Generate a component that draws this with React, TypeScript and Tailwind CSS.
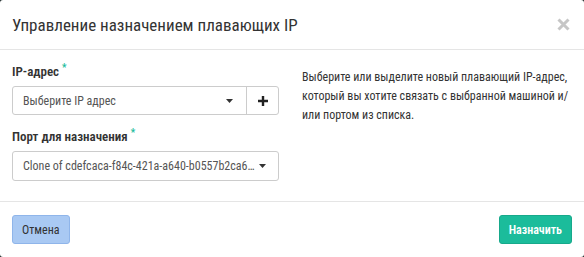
import React from "react";

const font = { fontFamily: "Roboto, 'Liberation Sans', sans-serif" };

function Caret() {
  return (
    <svg width="7" height="4" viewBox="0 0 7 4" className="shrink-0">
      <path d="M0 0 L7 0 L3.5 4 Z" fill="#333" />
    </svg>
  );
}

export default function App() {
  return (
    <div className="w-[584px] h-[257px] bg-[#1e2b2a]" style={font}>
      <div className="w-[584px] h-[257px] bg-white rounded-[3px] flex flex-col font-stretch-condensed">
        <div className="h-[50px] border-b border-[#e5e5e5] flex items-center justify-between pl-3 pr-[14px] shrink-0">
          <div className="text-[17px] text-[#333] pt-[2px]">Управление назначением плавающих IP</div>
          <svg width="13" height="13" viewBox="0 0 13 13" className="mb-[1px]">
            <path d="M1.5 1.5 L11.5 11.5 M11.5 1.5 L1.5 11.5" stroke="#c6c6c6" strokeWidth="3" />
          </svg>
        </div>
        <div className="flex h-[152px] border-b border-[#e5e5e5] shrink-0">
          <div className="w-[267px] ml-3 pt-[13px] flex flex-col">
            <div className="text-[13px] font-semibold text-[#333] leading-[18px] flex">
              IP-адрес<span className="text-[#1abc9c] text-[10px] ml-[3px] leading-[10px]">*</span>
            </div>
            <div className="mt-[5px] h-[29px] border border-[#ccc] rounded-[3px] flex">
              <div className="flex-1 flex items-center justify-between pl-[10px] pr-[13px] text-[12px] text-[#555]">
                <span>Выберите IP адрес</span>
                <Caret />
              </div>
              <div className="w-[32px] border-l border-[#ccc] flex items-center justify-center">
                <svg width="10" height="10" viewBox="0 0 10 10">
                  <path d="M5 0 V10 M0 5 H10" stroke="#222" strokeWidth="2.4" />
                </svg>
              </div>
            </div>
            <div className="mt-[13px] text-[13px] font-semibold text-[#333] leading-[18px] flex">
              Порт для назначения<span className="text-[#1abc9c] text-[10px] ml-[3px] leading-[10px]">*</span>
            </div>
            <div className="mt-[5px] h-[30px] border border-[#ccc] rounded-[3px] flex items-center justify-between pl-[10px] pr-[12px] text-[12px] text-[#555]">
              <span>Clone of cdefcaca-f84c-421a-a640-b0557b2ca6…</span>
              <Caret />
            </div>
          </div>
          <div className="ml-[23px] w-[275px] pt-[18px] text-[12px] leading-[19px] text-[#333]">
            Выберите или выделите новый плавающий IP-адрес, который вы хотите связать с выбранной машиной и/или портом из списка.
          </div>
        </div>
        <div className="flex items-center justify-between px-3 pt-[13px]">
          <button className="h-[29px] px-[9px] rounded-[3px] bg-[#a9c9f3] border border-[#8fb5ea] text-[12px] text-[#333]">
            Отмена
          </button>
          <button className="h-[29px] px-[9px] rounded-[3px] bg-[#1bbc9b] border border-[#17a98b] text-[12px] text-white font-semibold">
            Назначить
          </button>
        </div>
      </div>
    </div>
  );
}
